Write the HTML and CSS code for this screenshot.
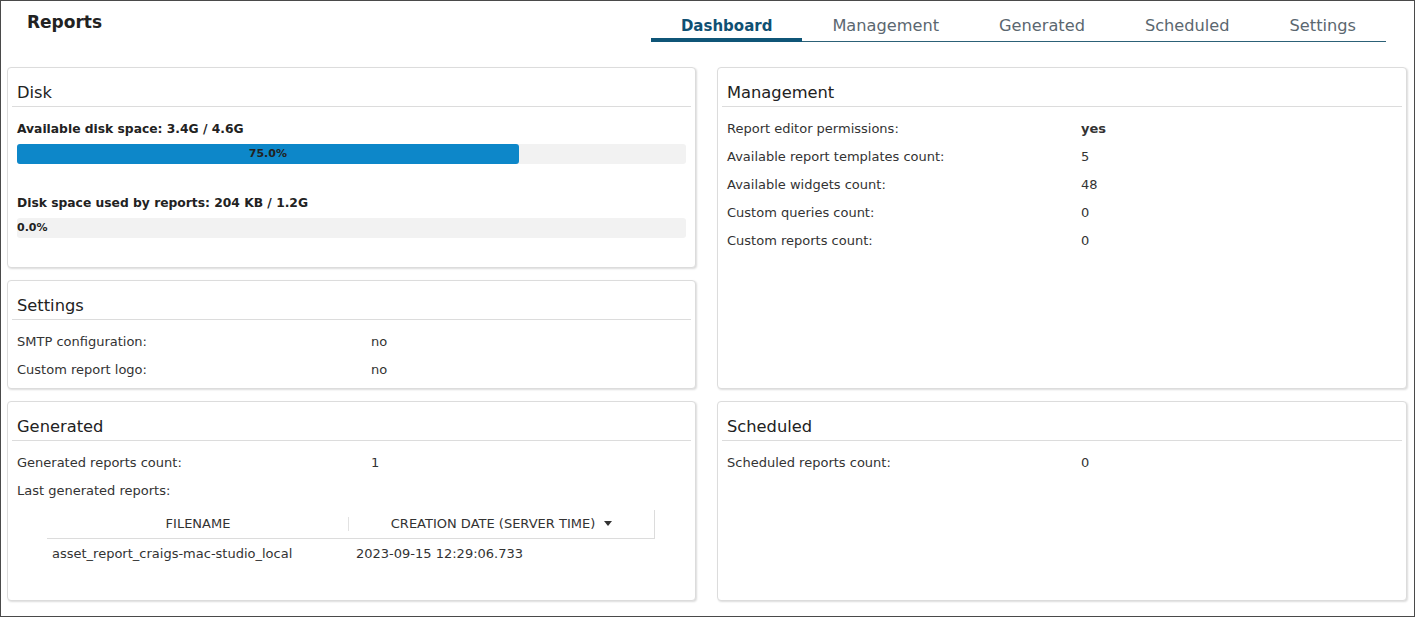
FILE: index.html
```html
<!DOCTYPE html>
<html lang="en">
<head>
<meta charset="utf-8">
<title>Reports</title>
<link rel="stylesheet" href="styles.css">
</head>
<body>
<div class="frame">
  <header class="topbar">
    <h1 class="page-title">Reports</h1>
    <nav class="tabs">
      <a class="tab active">Dashboard</a>
      <a class="tab">Management</a>
      <a class="tab">Generated</a>
      <a class="tab">Scheduled</a>
      <a class="tab">Settings</a>
    </nav>
  </header>

  <main class="grid">
    <section class="card card-disk">
      <h2 class="card-title">Disk</h2>
      <div class="card-body">
        <div class="bar-label">Available disk space: 3.4G / 4.6G</div>
        <div class="bar"><div class="bar-fill" style="width:75%"><span class="bar-text">75.0%</span></div></div>
        <div class="bar-label">Disk space used by reports: 204 KB / 1.2G</div>
        <div class="bar"><div class="bar-fill" style="width:0%"><span class="bar-text">0.0%</span></div></div>
      </div>
    </section>

    <section class="card card-mgmt">
      <h2 class="card-title">Management</h2>
      <div class="card-body kv">
        <span class="k">Report editor permissions:</span><span class="v strong">yes</span>
        <span class="k">Available report templates count:</span><span class="v">5</span>
        <span class="k">Available widgets count:</span><span class="v">48</span>
        <span class="k">Custom queries count:</span><span class="v">0</span>
        <span class="k">Custom reports count:</span><span class="v">0</span>
      </div>
    </section>

    <section class="card card-settings">
      <h2 class="card-title">Settings</h2>
      <div class="card-body kv">
        <span class="k">SMTP configuration:</span><span class="v">no</span>
        <span class="k">Custom report logo:</span><span class="v">no</span>
      </div>
    </section>

    <section class="card card-generated">
      <h2 class="card-title">Generated</h2>
      <div class="card-body">
        <div class="kv">
          <span class="k">Generated reports count:</span><span class="v">1</span>
          <span class="k">Last generated reports:</span><span class="v"></span>
        </div>
        <table class="reports-table">
          <thead>
            <tr>
              <th class="col-file">FILENAME</th>
              <th class="col-date">CREATION DATE (SERVER TIME)<svg class="caret" width="8" height="5" viewBox="0 0 8 5"><path d="M0 0H8L4 5Z" fill="#333"/></svg></th>
            </tr>
          </thead>
          <tbody>
            <tr>
              <td class="cell-file">asset_report_craigs-mac-studio_local</td>
              <td class="cell-date">2023-09-15 12:29:06.733</td>
            </tr>
          </tbody>
        </table>
      </div>
    </section>

    <section class="card card-scheduled">
      <h2 class="card-title">Scheduled</h2>
      <div class="card-body kv">
        <span class="k">Scheduled reports count:</span><span class="v">0</span>
      </div>
    </section>
  </main>
</div>
</body>
</html>
```

FILE: styles.css
```css
* { box-sizing: border-box; }

html, body {
  margin: 0;
  padding: 0;
  background: #fff;
}

body {
  font-family: "DejaVu Sans", "Liberation Sans", sans-serif;
  color: #333;
}

.frame {
  width: 1415px;
  height: 617px;
  border: 1px solid #4a4a4a;
  padding: 0 7px 0 6px;
  background: #fff;
}

.topbar {
  display: flex;
  justify-content: space-between;
  align-items: flex-start;
  height: 66px;
  padding: 0 21px 0 20px;
}

.page-title {
  margin: 10px 0 0;
  font-size: 17px;
  line-height: 22px;
  font-weight: bold;
  color: #222;
}

.tabs {
  display: flex;
  border-bottom: 1px solid #2c6177;
}

.tab {
  position: relative;
  display: block;
  padding: 15px 30px 5px;
  font-size: 16.2px;
  line-height: 20px;
  color: #5b6770;
  cursor: pointer;
}

.tab.active {
  font-weight: bold;
  font-size: 15px;
  color: #0f5073;
}

.tab.active::after {
  content: "";
  position: absolute;
  left: 0;
  right: 0;
  bottom: -1px;
  height: 4px;
  background: #0f5577;
}

.grid {
  display: grid;
  grid-template-columns: 689px 690px;
  grid-template-rows: auto auto auto;
  column-gap: 21px;
  row-gap: 12px;
}

.card-disk { grid-column: 1; grid-row: 1; }
.card-mgmt { grid-column: 2; grid-row: 1 / span 2; }
.card-settings { grid-column: 1; grid-row: 2; }
.card-generated { grid-column: 1; grid-row: 3; }
.card-scheduled { grid-column: 2; grid-row: 3; }

.card {
  border: 1px solid #dcdcdc;
  border-radius: 4px;
  box-shadow: 1px 1px 2px rgba(0, 0, 0, 0.14);
  padding: 4px;
  background: #fff;
}

.card-title {
  margin: 0;
  padding: 11px 5px 3px;
  font-size: 16.3px;
  line-height: 20px;
  font-weight: normal;
  color: #222;
  border-bottom: 1px solid #dcdcdc;
}

.card-body {
  padding: 8px 5px 0;
  font-size: 13px;
}

.kv {
  display: grid;
  grid-template-columns: 354px 1fr;
  line-height: 28px;
}

.k, .v { color: #333; }

.strong { font-weight: bold; }

.bar-label {
  font-size: 12.3px;
  font-weight: bold;
  line-height: 28px;
  color: #222;
}

.bar {
  height: 20px;
  margin: 1px 0 25px;
  background: #f2f2f2;
  border-radius: 3px;
}

.bar-fill {
  height: 20px;
  background: #0d87c9;
  border-radius: 3px;
  text-align: center;
  white-space: nowrap;
}

.bar-text {
  font-size: 11px;
  font-weight: bold;
  line-height: 20px;
  color: #222;
}

.reports-table {
  margin: 5px 0 28px 30px;
  width: 608px;
  border-collapse: collapse;
  font-size: 13px;
  color: #333;
}

.reports-table th {
  position: relative;
  height: 28px;
  padding: 0;
  font-weight: normal;
  text-align: center;
  border-bottom: 1px solid #dcdcdc;
}

.col-file { width: 302px; }

.col-file::after {
  content: "";
  position: absolute;
  right: 0;
  top: 7px;
  bottom: 7px;
  width: 1px;
  background: #e2e2e2;
}

.col-date {
  border-right: 1px solid #dcdcdc;
}

.caret {
  margin-left: 9px;
  vertical-align: 2px;
}

.reports-table td {
  height: 30px;
  padding: 0;
  white-space: nowrap;
}

.cell-file { padding-left: 5px !important; }
.cell-date { padding-left: 7px !important; }
```
